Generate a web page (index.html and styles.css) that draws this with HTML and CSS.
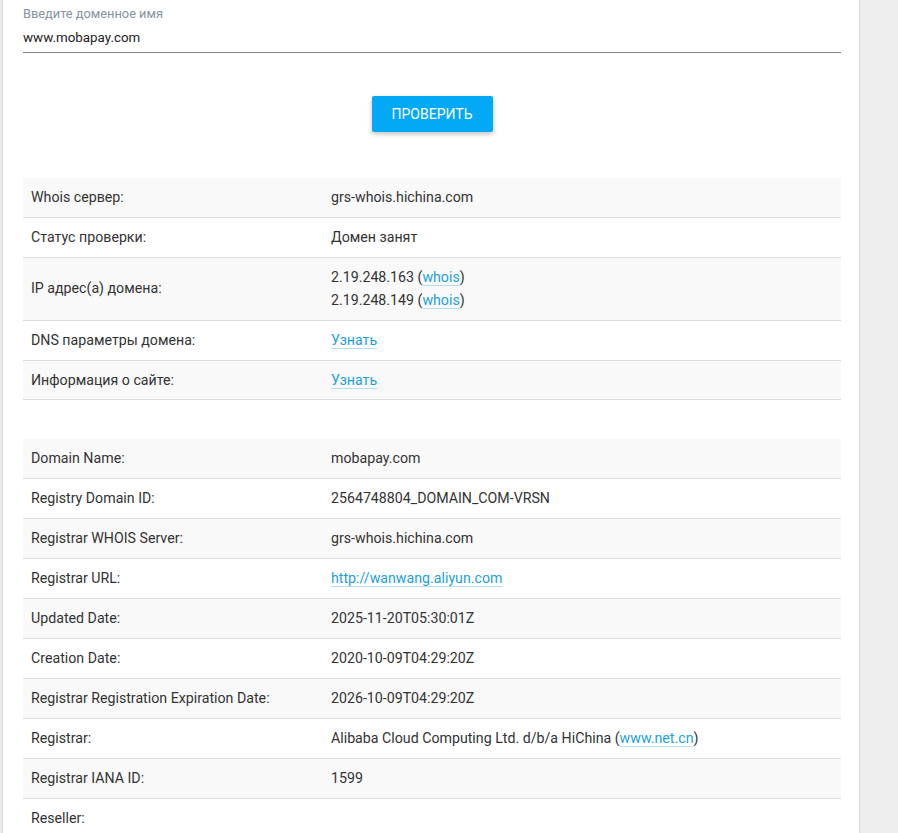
FILE: index.html
```html
<!DOCTYPE html>
<html lang="ru">

<head>
  <meta charset="UTF-8">
  <meta name="viewport" content="width=device-width, initial-scale=1.0">
  <title>Whois</title>
  <link rel="stylesheet" href="styles.css">
</head>

<body>
  <div class="page">
    <div class="card">

      <!-- domain form -->
      <form class="check-form">
        <div class="field">
          <label for="domain">Введите доменное имя</label>
          <input type="text" id="domain" value="www.mobapay.com">
        </div>
        <div class="actions">
          <button type="button" class="btn-check">Проверить</button>
        </div>
      </form>

      <table class="info-table">
        <tr><td>Whois сервер:</td><td>grs-whois.hichina.com</td></tr>
        <tr><td>Статус проверки:</td><td>Домен занят</td></tr>
        <tr>
          <td>IP адрес(а) домена:</td>
          <td>2.19.248.163 (<a href="#">whois</a>)<br>2.19.248.149 (<a href="#">whois</a>)</td>
        </tr>
        <tr><td>DNS параметры домена:</td><td><a href="#">Узнать</a></td></tr>
        <tr><td>Информация о сайте:</td><td><a href="#">Узнать</a></td></tr>
      </table>

      <table class="info-table whois-table">
        <tr><td>Domain Name:</td><td>mobapay.com</td></tr>
        <tr><td>Registry Domain ID:</td><td>2564748804_DOMAIN_COM-VRSN</td></tr>
        <tr><td>Registrar WHOIS Server:</td><td>grs-whois.hichina.com</td></tr>
        <tr><td>Registrar URL:</td><td><a href="#">http://wanwang.aliyun.com</a></td></tr>
        <tr><td>Updated Date:</td><td>2025-11-20T05:30:01Z</td></tr>
        <tr><td>Creation Date:</td><td>2020-10-09T04:29:20Z</td></tr>
        <tr><td>Registrar Registration Expiration Date:</td><td>2026-10-09T04:29:20Z</td></tr>
        <tr><td>Registrar:</td><td>Alibaba Cloud Computing Ltd. d/b/a HiChina (<a href="#">www.net.cn</a>)</td></tr>
        <tr><td>Registrar IANA ID:</td><td>1599</td></tr>
        <tr><td>Reseller:</td><td></td></tr>
      </table>

    </div>
  </div>
</body>

</html>
```

FILE: styles.css
```css
html, body {
  margin: 0;
  padding: 0;
  height: 100%;
  overflow: hidden;
  background-color: #eeeeee;
  font-family: Roboto, "Liberation Sans", sans-serif;
  color: #333;
}

.page {
  display: flex;
  padding-left: 3px;
}

.card {
  width: 856px;
  min-height: 900px;
  box-sizing: border-box;
  padding: 5px 18px 0 20px;
  background: #fff;
  box-shadow: 0 0 3px rgba(0, 0, 0, 0.18);
}

.field label {
  display: block;
  font-size: 12.8px;
  line-height: 18px;
  color: #8593a0;
}

.field input {
  display: block;
  width: 100%;
  box-sizing: border-box;
  border: none;
  border-bottom: 1px solid #7d8589;
  padding: 5px 0 4px;
  font-family: inherit;
  font-size: 13.4px;
  line-height: 20px;
  color: #222;
  outline: none;
}

.actions {
  display: flex;
  justify-content: center;
  padding: 43px 0 46px;
}

.btn-check {
  height: 36px;
  padding: 0 20px;
  border: none;
  border-radius: 2px;
  background: #03a9f4;
  color: #fff;
  font-family: inherit;
  font-size: 14px;
  text-transform: uppercase;
  box-shadow: 0 2px 5px rgba(0, 0, 0, 0.26);
  cursor: pointer;
}

.info-table {
  width: 100%;
  border-collapse: collapse;
  font-size: 14.2px;
  line-height: 22.9px;
}

.info-table td {
  padding: 8px;
  border-bottom: 1px solid #dddddd;
  vertical-align: middle;
}

.info-table td:first-child {
  width: 284px;
}

.info-table tr:nth-child(odd) {
  background: #f9f9f9;
}

.whois-table {
  margin-top: 39px;
}

a {
  color: #1e9fdc;
  text-decoration: none;
  border-bottom: 1px solid #b5def3;
}
```
